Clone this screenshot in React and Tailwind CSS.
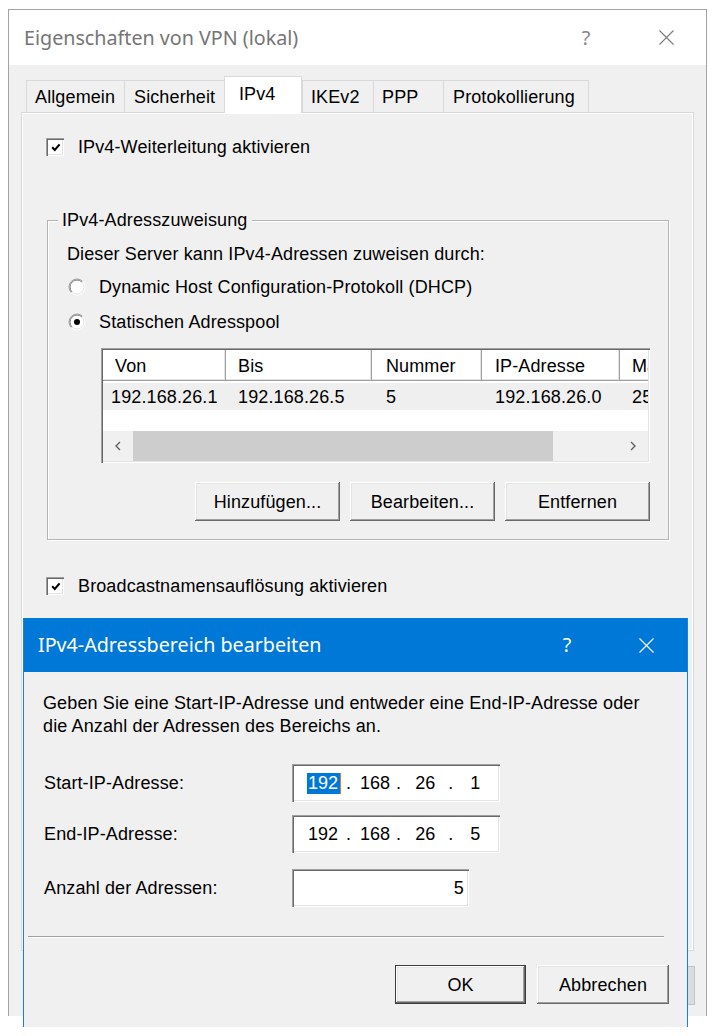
import React from "react";

// 3D edges like the classic Windows controls
const sunken =
  "shadow-[inset_1px_1px_0_#a0a0a0,inset_2px_2px_0_#696969,inset_-1px_-1px_0_#ffffff,inset_-2px_-2px_0_#e3e3e3]";
const raised =
  "shadow-[inset_-1px_-1px_0_#696969,inset_1px_1px_0_#ffffff,inset_-2px_-2px_0_#a0a0a0,inset_2px_2px_0_#e3e3e3]";
const titleFont = "font-['Noto_Sans','Open_Sans',sans-serif]";

function CloseIcon({ color }) {
  return (
    <svg width="15" height="15" viewBox="0 0 15 15">
      <path d="M0.5 0.5 L14.5 14.5 M14.5 0.5 L0.5 14.5" stroke={color} strokeWidth="1.1" fill="none" />
    </svg>
  );
}

function CheckBox() {
  return (
    <span className={`flex h-[18px] w-[18px] shrink-0 items-center justify-center bg-white ${sunken}`}>
      <svg width="10" height="9" viewBox="0 0 10 9" className="ml-[1px] mt-[1px]">
        <path d="M1.2 4.2 L3.8 6.9 L8.6 1.4" fill="none" stroke="#000" strokeWidth="2.1" />
      </svg>
    </span>
  );
}

function Radio({ on }) {
  return (
    <svg width="18" height="18" viewBox="0 0 18 18" className="shrink-0">
      <circle cx="9" cy="9" r="8" fill="#fff" />
      <path d="M3.34 14.66 A8 8 0 0 1 14.66 3.34" fill="none" stroke="#a0a0a0" strokeWidth="1" />
      <path d="M4.05 13.95 A7 7 0 0 1 13.95 4.05" fill="none" stroke="#7a7a7a" strokeWidth="1" />
      <path d="M14.66 3.34 A8 8 0 0 1 3.34 14.66" fill="none" stroke="#ffffff" strokeWidth="1" />
      <path d="M13.95 4.05 A7 7 0 0 1 4.05 13.95" fill="none" stroke="#e3e3e3" strokeWidth="1" />
      {on && <circle cx="9" cy="9" r="3" fill="#000" />}
    </svg>
  );
}

function Button({ children, w, isDefault }) {
  return (
    <div
      className={`flex h-[39px] items-center justify-center bg-[#f0f0f0] ${raised} ${w} ${
        isDefault ? "border border-[#3c3c3c]" : ""
      }`}
    >
      {children}
    </div>
  );
}

function Chevron({ dir }) {
  return (
    <svg width="6" height="10" viewBox="0 0 6 10">
      <path
        d={dir === "left" ? "M5 1 L1 5 L5 9" : "M1 1 L5 5 L1 9"}
        fill="none"
        stroke="#606060"
        strokeWidth="1.4"
      />
    </svg>
  );
}

const columns = [
  { head: "Von", value: "192.168.26.1", w: "w-[123px]", hp: "pl-[12px]", rp: "pl-[8px]" },
  { head: "Bis", value: "192.168.26.5", w: "w-[146px]", hp: "pl-[12px]", rp: "pl-[12px]" },
  { head: "Nummer", value: "5", w: "w-[110px]", hp: "pl-[14px]", rp: "pl-[14px]" },
  { head: "IP-Adresse", value: "192.168.26.0", w: "w-[138px]", hp: "pl-[13px]", rp: "pl-[13px]" },
  { head: "Maske", value: "255.255.255.0", w: "w-[140px]", hp: "pl-[12px]", rp: "pl-[12px]" },
];

function AddressList() {
  return (
    <div className={`ml-[53px] mt-[16px] flex h-[115px] w-[549px] flex-col bg-white p-[2px] ${sunken}`}>
      <div className="flex h-[31px] shrink-0 overflow-hidden">
        {columns.map((c) => (
          <div
            key={c.head}
            className={`flex h-full shrink-0 items-center whitespace-nowrap bg-white shadow-[inset_-1px_-1px_0_#a0a0a0,inset_-2px_-2px_0_#e3e3e3] ${c.w} ${c.hp}`}
          >
            {c.head}
          </div>
        ))}
      </div>
      <div className="mt-[2px] flex h-[27px] shrink-0 overflow-hidden bg-[#efefef]">
        {columns.map((c) => (
          <div key={c.head} className={`flex shrink-0 items-center whitespace-nowrap ${c.w} ${c.rp}`}>
            {c.value}
          </div>
        ))}
      </div>
      <div className="mt-auto flex h-[30px] shrink-0 items-stretch bg-[#f0f0f0]">
        <div className="flex w-[30px] items-center justify-center">
          <Chevron dir="left" />
        </div>
        <div className="w-[420px] bg-[#cdcdcd]" />
        <div className="ml-auto flex w-[30px] items-center justify-center">
          <Chevron dir="right" />
        </div>
      </div>
    </div>
  );
}

function IpField({ parts, selected }) {
  return (
    <div className={`flex h-[38px] w-[208px] items-center bg-white pl-[15px] tracking-normal ${sunken}`}>
      <span
        className={`pl-[1px] pr-[2px] leading-[21px] border-r ${
          selected ? "border-[#e8791c] bg-[#0078d7] text-white" : "border-transparent"
        }`}
      >
        {parts[0]}
      </span>
      <span className="ml-[5px]">.</span>
      <span className="ml-[9px]">{parts[1]}</span>
      <span className="ml-[6px]">.</span>
      <span className="ml-[14px]">{parts[2]}</span>
      <span className="ml-[13px]">.</span>
      <span className="ml-[17px]">{parts[3]}</span>
    </div>
  );
}

const tabs = [
  { label: "Allgemein", w: "w-[98px]", pl: "pl-[8px]" },
  { label: "Sicherheit", w: "w-[100px]", pl: "pl-[9px]" },
  { label: "IPv4", w: "w-[78px]", pl: "pl-[14px]", active: true },
  { label: "IKEv2", w: "w-[71px]", pl: "pl-[8px]" },
  { label: "PPP", w: "w-[70px]", pl: "pl-[8px]" },
  { label: "Protokollierung", w: "w-[146px]", pl: "pl-[9px]" },
];

export default function App() {
  return (
    <div className="relative h-[1036px] w-[717px] overflow-hidden bg-white font-['Liberation_Sans',Arial,sans-serif] text-[18px] leading-[20px] tracking-[0.12px] text-black">
      {/* Eigenschaften-Fenster im Hintergrund */}
      <div className="ml-[8px] mt-[9px] flex h-[1007px] w-[699px] flex-col border border-[#a3a3a3] border-b-0 bg-[#f0f0f0]">
        <div className="flex h-[55px] shrink-0 items-center bg-white pl-[15px] pr-[32px]">
          <span className={`${titleFont} text-[19.7px] tracking-normal text-[#757575]`}>Eigenschaften von VPN (lokal)</span>
          <span className={`${titleFont} ml-auto mr-[63px] w-[20px] text-center text-[19.7px] text-[#858585]`}>?</span>
          <CloseIcon color="#7a7a7a" />
        </div>

        <div className="flex h-[47px] shrink-0 items-end pl-[17px]">
          {tabs.map((t) =>
            t.active ? (
              <div
                key={t.label}
                className={`relative z-10 -mb-px flex h-[37px] items-center border border-b-0 border-[#d9d9d9] bg-white pb-[2px] ${t.w} ${t.pl}`}
              >
                {t.label}
              </div>
            ) : (
              <div
                key={t.label}
                className={`flex h-[32px] items-center border border-b-0 border-r-0 border-[#d9d9d9] last:border-r ${t.w} ${t.pl}`}
              >
                {t.label}
              </div>
            )
          )}
        </div>

        <div className="ml-[12px] flex h-[839px] w-[673px] shrink-0 flex-col border border-[#d9d9d9] bg-[#f0f0f0] shadow-[inset_1px_1px_0_#ffffff,inset_-1px_-1px_0_#ffffff]">
          <div className="ml-[24px] mt-[25px] flex h-[18px] items-center gap-[14px]">
            <CheckBox />
            <span>IPv4-Weiterleitung aktivieren</span>
          </div>

          <div className="relative ml-[25px] mt-[64px] flex h-[320px] w-[622px] shrink-0 flex-col border border-[#b4b4b4] shadow-[1px_1px_0_#ffffff,inset_1px_1px_0_#ffffff]">
            <span className="absolute -top-[11px] left-[10px] bg-[#f0f0f0] px-[4px]">IPv4-Adresszuweisung</span>
            <div className="ml-[19px] mt-[23px]">Dieser Server kann IPv4-Adressen zuweisen durch:</div>
            <div className="ml-[20px] mt-[13px] flex h-[20px] items-center gap-[13px]">
              <Radio />
              <span>Dynamic Host Configuration-Protokoll (DHCP)</span>
            </div>
            <div className="ml-[20px] mt-[15px] flex h-[20px] items-center gap-[13px]">
              <Radio on />
              <span>Statischen Adresspool</span>
            </div>
            <AddressList />
            <div className="mt-[19px] flex justify-end gap-[10px] pr-[18px]">
              <Button w="w-[145px]">Hinzufügen...</Button>
              <Button w="w-[145px]">Bearbeiten...</Button>
              <Button w="w-[145px]">Entfernen</Button>
            </div>
          </div>

          <div className="ml-[24px] mt-[37px] flex h-[18px] items-center gap-[14px]">
            <CheckBox />
            <span>Broadcastnamensauflösung aktivieren</span>
          </div>
        </div>

        {/* Schaltflächen des Hintergrundfensters, vom Dialog verdeckt */}
        <div className="mt-[15px] flex justify-end gap-[10px] pr-[11px]">
          <Button w="w-[130px]" />
          <Button w="w-[130px]" />
          <div className="h-[39px] w-[130px] border border-[#c4c4c4] bg-[#dcdcdc]" />
        </div>
      </div>

      {/* Dialog IPv4-Adressbereich bearbeiten */}
      <div className="absolute left-[23px] top-[618px] flex h-[409px] w-[665px] flex-col border-x border-[#1a7fd6] bg-[#f0f0f0]">
        <div className="flex h-[54px] shrink-0 items-center bg-[#0078d7] pl-[14px] pr-[33px] text-white">
          <span className={`${titleFont} text-[19.7px] tracking-normal`}>IPv4-Adressbereich bearbeiten</span>
          <span className={`${titleFont} ml-auto mr-[62px] w-[20px] text-center text-[19.7px]`}>?</span>
          <CloseIcon color="#ffffff" />
        </div>

        <p className="pl-[19px] pt-[20px] leading-[23px]">
          Geben Sie eine Start-IP-Adresse und entweder eine End-IP-Adresse oder
          <br />
          die Anzahl der Adressen des Bereichs an.
        </p>

        <div className="mt-[26px] flex h-[38px] items-center">
          <span className="w-[268px] pl-[20px]">Start-IP-Adresse:</span>
          <IpField parts={["192", "168", "26", "1"]} selected />
        </div>
        <div className="mt-[13px] flex h-[38px] items-center">
          <span className="w-[268px] pl-[20px]">End-IP-Adresse:</span>
          <IpField parts={["192", "168", "26", "5"]} />
        </div>
        <div className="mt-[16px] flex h-[38px] items-center">
          <span className="w-[268px] pl-[20px]">Anzahl der Adressen:</span>
          <div className={`flex h-[38px] w-[177px] items-center justify-end bg-white pr-[5px] ${sunken}`}>5</div>
        </div>

        <div className="ml-[4px] mt-[29px] h-[2px] w-[636px] border-t border-b border-t-[#a0a0a0] border-b-white" />

        <div className="mt-[27px] flex justify-end gap-[11px] pr-[18px]">
          <Button w="w-[131px]" isDefault>
            OK
          </Button>
          <Button w="w-[132px]">Abbrechen</Button>
        </div>
      </div>
    </div>
  );
}
